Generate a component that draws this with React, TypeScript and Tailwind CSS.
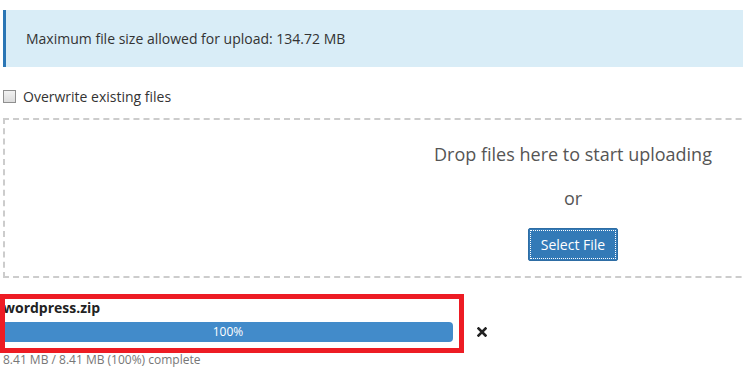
import React from "react";

export default function App() {
  return (
    <div
      className="w-[743px] h-[367px] overflow-hidden bg-white relative"
      style={{ fontFamily: '"Open Sans", "Noto Sans", sans-serif' }}
    >
      <div className="w-[1140px] ml-[3px] pt-[10px]">
        <div className="h-[57px] flex items-center bg-[#d9edf7] border-l-[3px] border-[#2a76b5] pl-[20px] text-[14px] text-[#333]">
          Maximum file size allowed for upload: 134.72 MB
        </div>

        <label className="mt-[19px] h-[20px] flex items-center text-[14px] text-[#333]">
          <span className="w-[13px] h-[13px] border border-[#8f8f8f] bg-gradient-to-b from-[#f2f2f2] to-[#dcdcdc] mr-[7px] inline-block" />
          Overwrite existing files
        </label>

        <div className="mt-[12px] h-[160px] border-2 border-dashed border-[#cccccc] flex flex-col items-center pt-[22px]">
          <div className="text-[18px] leading-[25px] text-[#555]">Drop files here to start uploading</div>
          <div className="mt-[19px] text-[18px] leading-[25px] text-[#555]">or</div>
          <button className="mt-[17px] w-[90px] h-[33px] bg-[#337ab7] border border-[#2e6da4] rounded-[2px] text-white text-[14px] outline-1 outline-dotted outline-white outline-offset-[-3px]">
            Select File
          </button>
        </div>

        <div className="mt-[20px] text-[14px] leading-[20px] font-bold text-[#222]">wordpress.zip</div>
        <div className="mt-[4px] flex items-center">
          <div className="w-[450px] h-[20px] bg-[#428bca] rounded-r-[4px] flex items-center justify-center text-white text-[12px]">
            100%
          </div>
          <svg className="ml-[24px]" width="10" height="10" viewBox="0 0 10 10">
            <path d="M1.5 1.5 L8.5 8.5 M8.5 1.5 L1.5 8.5" stroke="#222" strokeWidth="2.6" strokeLinecap="square" />
          </svg>
        </div>
        <div className="mt-[9px] text-[12px] leading-[17px] text-[#777]">8.41 MB / 8.41 MB (100%) complete</div>
      </div>

      <div className="absolute left-0 top-[294px] w-[464px] h-[59px] border-[5px] border-[#ed1c24] pointer-events-none" />
    </div>
  );
}
